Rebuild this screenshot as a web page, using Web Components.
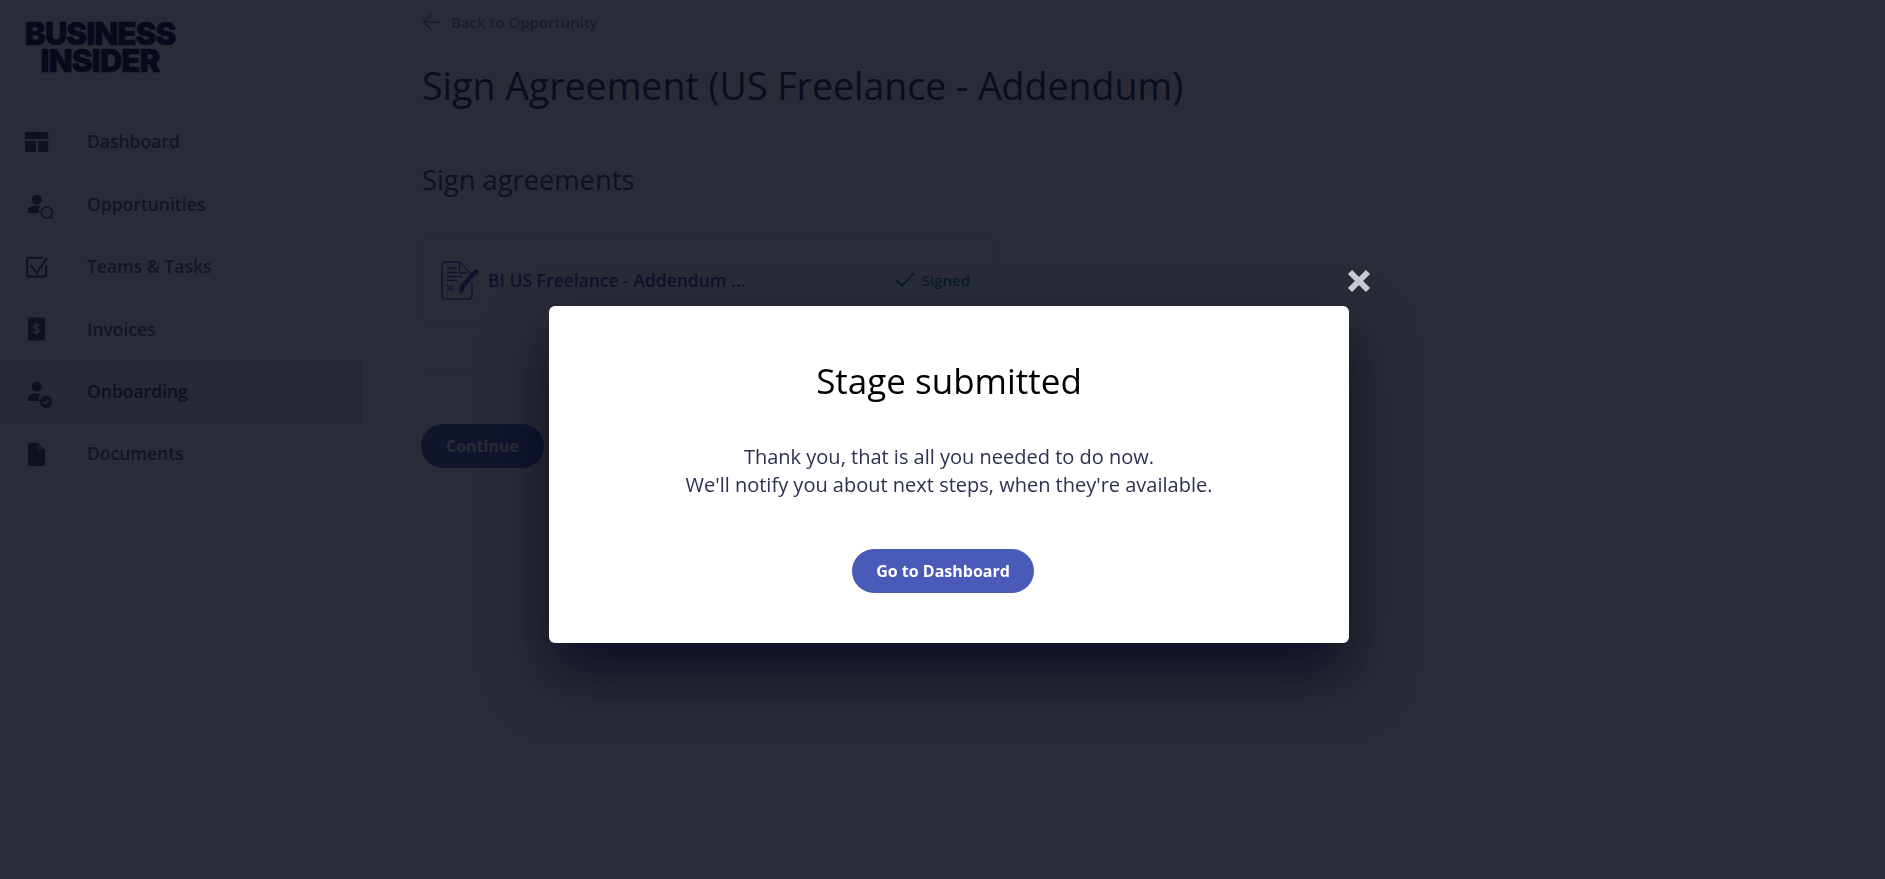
<!DOCTYPE html>
<html lang="en">
<head>
<meta charset="utf-8">
<title>Sign Agreement</title>
<style>
  html, body { margin: 0; height: 100%; }
  body { background: #fff; font-family: "Open Sans", sans-serif; overflow: hidden; }
</style>
</head>
<body>
<app-shell>
  <side-bar slot="side">
    <nav-item label="Dashboard" icon="dashboard"></nav-item>
    <nav-item label="Opportunities" icon="search"></nav-item>
    <nav-item label="Teams &amp; Tasks" icon="check"></nav-item>
    <nav-item label="Invoices" icon="invoice"></nav-item>
    <nav-item label="Onboarding" icon="onboard" active></nav-item>
    <nav-item label="Documents" icon="doc"></nav-item>
  </side-bar>
  <agreement-page></agreement-page>
</app-shell>
<stage-modal heading="Stage submitted" action="Go to Dashboard">
  Thank you, that is all you needed to do now.<br>We'll notify you about next steps, when they're available.
</stage-modal>

<script>
// every nav icon is drawn in the same 32x30 box so the rows line up
const ICONS = {
  dashboard: `<path fill="currentColor" d="M5 4.700h19.300a2 2 0 0 1 2 2V12H3V6.700a2 2 0 0 1 2-2zM3 13.700h11V25H5a2 2 0 0 1-2-2zM16.300 13.700h10V23a2 2 0 0 1-2 2h-8z"/>`,
  search: `<circle cx="14.700" cy="9.600" r="5" fill="currentColor"/><path fill="currentColor" d="M6 23v-3c0-2.800 3.500-4.600 8.700-4.600 1.300 0 2.500.1 3.500.4a8 8 0 0 0-1.200 7.200z"/><circle cx="24.700" cy="22.600" r="5.500" fill="none" stroke="currentColor" stroke-width="1.400"/><path d="M28.500 26.500l2 2" stroke="currentColor" stroke-width="1.400"/>`,
  check: `<path fill="none" stroke="currentColor" stroke-width="2" stroke-linejoin="round" d="M24.200 13v10a1.500 1.500 0 0 1-1.500 1.500H6.700A1.500 1.500 0 0 1 5.200 23V7.300a1.500 1.500 0 0 1 1.500-1.500h14"/><path fill="none" stroke="currentColor" stroke-width="2" d="M8.700 13l6 8L24.700 6.300"/>`,
  invoice: `<path fill="currentColor" d="M8 3.600h13a2 2 0 0 1 2 2V27l-1.400-1-1.400 1-1.400-1-1.400 1-1.400-1-1.400 1-1.400-1-1.400 1-1.400-1-1.400 1-1.400-1L6 27V5.600a2 2 0 0 1 2-2z"/><text x="14.500" y="19.800" text-anchor="middle" font-family="Open Sans" font-size="14" font-weight="600" fill="#fff">$</text>`,
  onboard: `<circle cx="14.700" cy="9.700" r="5" fill="currentColor"/><path fill="currentColor" d="M6 24v-3c0-2.800 3.500-4.600 8.700-4.600 1.300 0 2.500.1 3.500.4a8 8 0 0 0-1 7.200z"/><circle cx="24" cy="24.700" r="6.300" fill="currentColor"/><path d="M21 24.700l2.200 2.200 3.800-4" fill="none" stroke="#fff" stroke-width="1.300"/>`,
  doc: `<path fill="currentColor" d="M8 3.800h7.500L23 11.300V25a2 2 0 0 1-2 2H8a2 2 0 0 1-2-2V5.800a2 2 0 0 1 2-2z"/><path fill="#fff" fill-opacity=".45" d="M16 5.500l5.300 5.500H16z"/>`
};

class AppShell extends HTMLElement {
  constructor() {
    super();
    this.attachShadow({mode: "open"}).innerHTML = `
      <style>
        :host { display: flex; height: 879px; }
      </style>
      <slot name="side"></slot>
      <slot></slot>`;
  }
}

class SideBar extends HTMLElement {
  constructor() {
    super();
    this.attachShadow({mode: "open"}).innerHTML = `
      <style>
        :host { display: block; flex: 0 0 362px; background: #fff; box-shadow: 0 0 30px rgba(0,0,0,.05); }
        .logo { box-sizing: border-box; height: 111px; width: 152px; margin-left: 24px; padding-top: 20px; font-family: Inter, sans-serif; font-weight: 900; font-size: 31.500px; line-height: 27px; letter-spacing: -1.100px; -webkit-text-stroke: .4px #050a28; color: #050a28; text-align: center; white-space: nowrap; }
      </style>
      <div class="logo">BUSINESS<br>INSIDER</div>
      <slot></slot>`;
  }
}

class NavItem extends HTMLElement {
  constructor() {
    super();
    const label = this.getAttribute("label").replace("&", "&amp;");
    this.attachShadow({mode: "open"}).innerHTML = `
      <style>
        :host { display: flex; align-items: center; height: 62.400px; color: #5a5c6e; font-size: 17.500px; font-weight: 600; }
        :host([active]) { background: linear-gradient(90deg, #e8e8e6 0, #e8e8e6 321px, #e0e0dd 321px); color: #34364a; }
        .icon { flex: 0 0 87px; box-sizing: border-box; padding-left: 22px; display: flex; color: #3a3c50; }
        .label { padding-bottom: 1.500px; }
        svg { overflow: visible; }
      </style>
      <span class="icon"><svg width="32" height="30" viewBox="0 0 32 30">${ICONS[this.getAttribute("icon")]}</svg></span>
      <span class="label">${label}</span>`;
  }
}

class AgreementPage extends HTMLElement {
  constructor() {
    super();
    this.attachShadow({mode: "open"}).innerHTML = `
      <style>
        :host { display: block; flex: 1; padding: 11px 0 0 59px; }
        .back { display: flex; align-items: center; gap: 11px; height: 22px; margin-left: 1px; font-size: 15px; font-weight: 600; color: #8a8c9e; }
        h1 { margin: 28px 0 0 1px; font-size: 37.500px; line-height: 50px; font-weight: 400; color: #1c1e30; }
        h2 { margin: 50px 0 0 1px; font-size: 27.300px; line-height: 38px; font-weight: 400; color: #3f4160; }
        hr { width: 574px; height: 1px; margin: 51px 0 50px; border: 0; background: #e4e4e9; }
      </style>
      <div class="back">
        <svg width="18" height="18" viewBox="0 0 18 18"><path fill="none" stroke="#7a7d98" stroke-width="1.400" d="M18 9H1.500M9 1.500L1.500 9 9 16.500"/></svg>
        Back to Opportunity
      </div>
      <h1>Sign Agreement (US Freelance - Addendum)</h1>
      <h2>Sign agreements</h2>
      <agreement-card></agreement-card>
      <hr>
      <pill-button>Continue</pill-button>`;
  }
}

class AgreementCard extends HTMLElement {
  constructor() {
    super();
    this.attachShadow({mode: "open"}).innerHTML = `
      <style>
        :host { display: flex; align-items: center; box-sizing: border-box; width: 574px; height: 84px; margin-top: 39px; padding: 0 24px 0 19px; border: 1px solid #e6e6ea; border-radius: 5px; font-size: 17.500px; font-weight: 600; }
        .name { margin-left: 9px; color: #3f4db0; flex: 1; }
        .status { display: flex; align-items: center; gap: 7px; font-size: 15px; color: #0f8f7c; }
      </style>
      <svg width="38" height="39" viewBox="0 0 38 39" fill="none" stroke="#3f4db0" stroke-width="1.400">
        <path d="M18.500 1H4a3 3 0 0 0-3 3v31a3 3 0 0 0 3 3h24a3 3 0 0 0 3-3V21M18.500 1L31 14M18.500 1v11H27"/>
        <path d="M6 7h10M6 11.500h10M6 15.500h15M6 19.500h11M6 24l6 6M12 24l-6 6"/>
        <path stroke-width="4.500" d="M20 30l2-5 11-13"/>
        <path fill="#3f4db0" stroke-width="0" d="M18 33l1-6 4 3z"/>
        <circle cx="35" cy="11" r="2.500" fill="#3f4db0" stroke="none"/>
      </svg>
      <span class="name">BI US Freelance - Addendum ...</span>
      <span class="status">
        <svg width="20" height="16" viewBox="0 0 20 16"><path fill="none" stroke="#0f8f7c" stroke-width="2.200" d="M1 8l6 6L19 1"/></svg>
        Signed
      </span>`;
  }
}

class PillButton extends HTMLElement {
  constructor() {
    super();
    this.attachShadow({mode: "open"}).innerHTML = `
      <style>
        :host { display: inline-flex; align-items: center; justify-content: center; box-sizing: border-box; height: 44px; padding: 0 25px 1px; border-radius: 22px; background: #4a5ab8; color: #fff; font-size: 16px; font-weight: 700; }
      </style>
      <slot></slot>`;
  }
}

class StageModal extends HTMLElement {
  constructor() {
    super();
    const heading = this.getAttribute("heading");
    const action = this.getAttribute("action");
    this.attachShadow({mode: "open"}).innerHTML = `
      <style>
        :host { position: fixed; inset: 0; display: flex; justify-content: center; align-items: flex-start; box-sizing: border-box; padding: 306px 0 0 13px; background: rgba(8,10,24,.865); }
        .box { position: relative; box-sizing: border-box; width: 800px; height: 337px; padding-top: 51px; background: #fff; border-radius: 6px; text-align: center; box-shadow: 0 30px 60px rgba(0,2,28,.65); }
        h2 { margin: 0; font-size: 35px; line-height: 48px; font-weight: 400; color: #000; }
        p { margin: 38px 0 0; font-size: 20px; line-height: 28px; color: #2d3150; }
        pill-button { margin: 50px 12px 0 0; padding-left: 24px; padding-right: 24px; }
        .close { position: absolute; right: -22px; top: -37px; }
      </style>
      <div class="box">
        <svg class="close" width="24" height="24" viewBox="0 0 24 24"><path stroke="#c9cacf" stroke-width="6" d="M3 3l18 18M21 3L3 21"/></svg>
        <h2>${heading}</h2>
        <p><slot></slot></p>
        <pill-button>${action}</pill-button>
      </div>`;
  }
}

customElements.define("pill-button", PillButton);
customElements.define("app-shell", AppShell);
customElements.define("side-bar", SideBar);
customElements.define("nav-item", NavItem);
customElements.define("agreement-card", AgreementCard);
customElements.define("agreement-page", AgreementPage);
customElements.define("stage-modal", StageModal);
</script>
</body>
</html>
